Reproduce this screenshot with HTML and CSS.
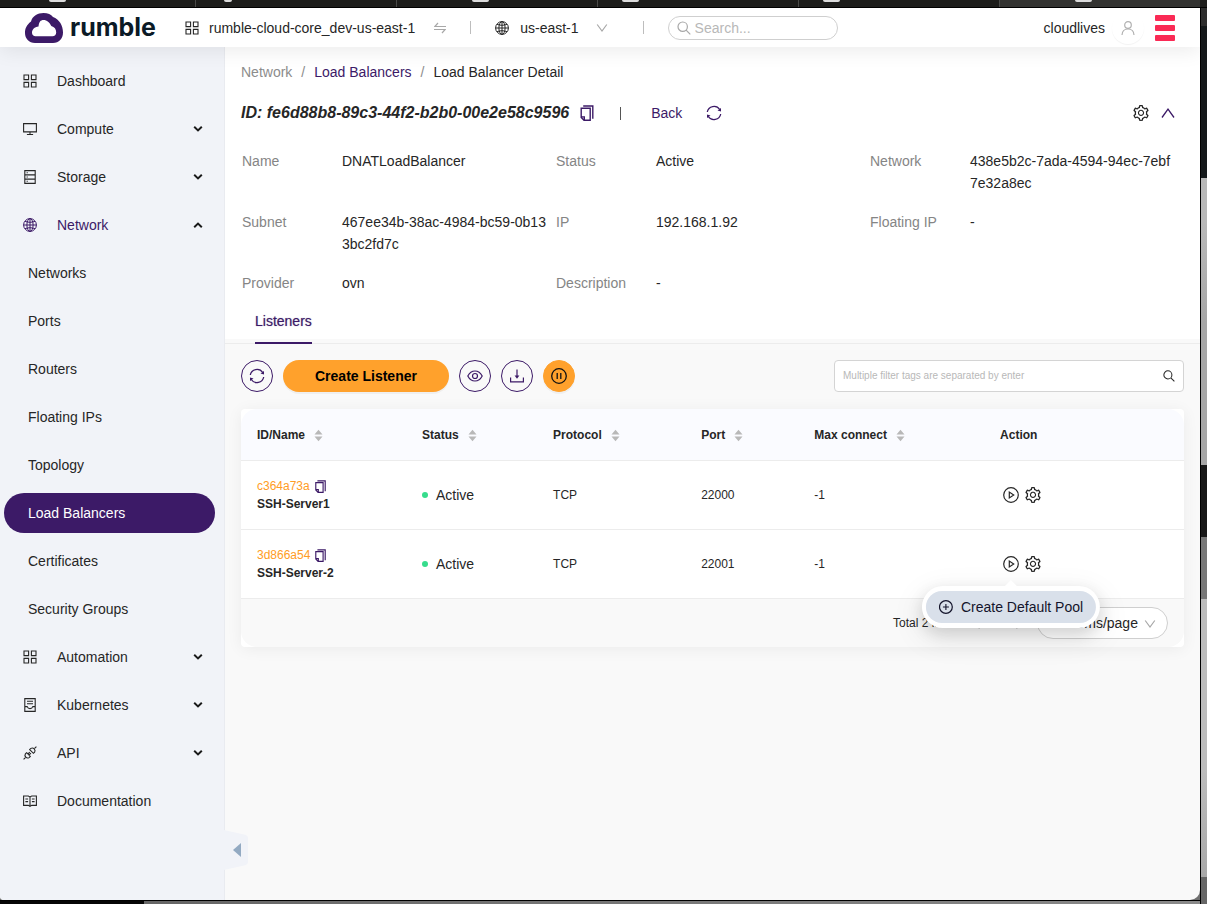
FILE: index.html
```html
<!DOCTYPE html>
<html lang="en">
<head>
<meta charset="utf-8">
<title>Load Balancer Detail - Rumble Cloud</title>
<link rel="stylesheet" href="styles.css">
</head>
<body>
<svg class="sprite" aria-hidden="true">
  <symbol id="grid" viewBox="0 0 14 14"><path d="M1 1h4.6v4.6H1zM8.4 1H13v4.6H8.4zM1 8.4h4.6V13H1zM8.4 8.4H13V13H8.4z" fill="none" stroke="currentColor" stroke-width="1.1"/></symbol>
  <symbol id="monitor" viewBox="0 0 14 14"><path d="M.6 1.6h12.8v8.3H.6zM7 10v2.4M3.9 12.5h6.2" fill="none" stroke="currentColor" stroke-width="1.1"/></symbol>
  <symbol id="storage" viewBox="0 0 14 14"><path d="M1.8.6h10.4v12.8H1.8zM1.8 4.9h10.4M1.8 9.1h10.4" fill="none" stroke="currentColor" stroke-width="1.1"/><path d="M3.6 2.2h1.2v1.1H3.6zM3.6 6.4h1.2v1.1H3.6zM3.6 10.7h1.2v1.1H3.6z" fill="currentColor"/></symbol>
  <symbol id="globe" viewBox="0 0 14 14"><g fill="none" stroke="currentColor" stroke-width="1"><circle cx="7" cy="7" r="6.4"/><ellipse cx="7" cy="7" rx="3.1" ry="6.4"/><path d="M7 .6v12.8M.6 7h12.8M2 3.3c3 1.3 7 1.3 10 0M2 10.7c3-1.3 7-1.3 10 0"/></g></symbol>
  <symbol id="kube" viewBox="0 0 14 14"><path d="M1.8.6h10.4v12.8H1.8zM4 3.3h6M4 5.7h6M1.8 8.6h2.4c.5 1.4 1.5 2 2.8 2s2.3-.6 2.8-2h2.4" fill="none" stroke="currentColor" stroke-width="1.1"/></symbol>
  <symbol id="plug" viewBox="0 0 14 14"><g fill="none" stroke="currentColor" stroke-width="1.1"><path d="M6.7 3.6 10.4 7.3l1.200-1.200a2.700 2.700 0 0 0-3.700-3.700zM3.600 6.700 7.300 10.400 6.100 11.600a2.700 2.700 0 0 1-3.700-3.700zM11.600 2.400 13.400.6M2.400 11.600.6 13.400M4.900 8l1.900-1.900M6 9.100l1.900-1.900"/></g></symbol>
  <symbol id="book" viewBox="0 0 14 14"><path d="M.6 2h4.7L7 2.9 8.7 2h4.7v9.4H8.7L7 12.4l-1.7-1H.6zM7 3v9M2.4 5h2.7M2.4 7.6h2.7M8.9 5h2.7M8.9 7.6h2.7" fill="none" stroke="currentColor" stroke-width="1.1"/></symbol>
  <symbol id="bold-down" viewBox="0 0 10 10"><path d="M1.2 2.800 5 6.400l3.800-3.600" fill="none" stroke="currentColor" stroke-width="2"/></symbol>
  <symbol id="bold-up" viewBox="0 0 10 10"><path d="M1.200 7.200 5 3.600l3.800 3.600" fill="none" stroke="currentColor" stroke-width="2"/></symbol>
  <symbol id="down" viewBox="0 0 12 12"><path d="M1.2 2.500 6 9l4.800-6.500" fill="none" stroke="currentColor" stroke-width="1.200"/></symbol>
  <symbol id="up" viewBox="0 0 14 14"><path d="M1 11.500 7 3.200l6 8.300" fill="none" stroke="currentColor" stroke-width="1.300"/></symbol>
  <symbol id="left" viewBox="0 0 12 12"><path d="M8.500 1 3 6l5.500 5" fill="none" stroke="currentColor" stroke-width="1.200"/></symbol>
  <symbol id="right" viewBox="0 0 12 12"><path d="M3.500 1 9 6l-5.500 5" fill="none" stroke="currentColor" stroke-width="1.200"/></symbol>
  <symbol id="swap" viewBox="0 0 12 12"><path d="M12 4.500H.8L4 1M0 7.500h11.200L8 11" fill="none" stroke="currentColor" stroke-width="1.200"/></symbol>
  <symbol id="search" viewBox="0 0 14 14"><g fill="none" stroke="currentColor" stroke-width="1.200"><circle cx="5.700" cy="5.700" r="4.700"/><path d="m9.100 9.100 4.200 4.200"/></g></symbol>
  <symbol id="user" viewBox="0 0 14 14"><g fill="none" stroke="currentColor" stroke-width="1.200"><circle cx="7" cy="4" r="3.300"/><path d="M1 14c.2-3.700 2.600-6 6-6s5.800 2.300 6 6"/></g></symbol>
  <symbol id="copy" viewBox="0 0 16 16"><path d="M4.200 1h9.600v12.700M2.200 3.200h9v12H5l-2.800-2.800zM5.300 14.800v-2.900H2.500" fill="none" stroke="currentColor" stroke-width="1.400"/></symbol>
  <symbol id="reload" viewBox="0 0 16 16"><path d="M1.300 7A6.800 6.800 0 0 1 13.700 4.500M14.700 9A6.800 6.800 0 0 1 2.300 11.500" fill="none" stroke="currentColor" stroke-width="1.300"/><path d="M15 3v3.500l-3.500-.9zM1 13V9.500l3.500.9z" fill="currentColor"/></symbol>
  <symbol id="eye" viewBox="0 0 16 16"><g fill="none" stroke="currentColor" stroke-width="1.200"><path d="M.8 8C2.500 4.700 5 3 8 3s5.500 1.700 7.200 5C13.500 11.300 11 13 8 13S2.500 11.300.8 8z"/><circle cx="8" cy="8" r="2.500"/></g></symbol>
  <symbol id="download" viewBox="0 0 16 16"><path d="M8 1.500V9M1.600 9.600v4.200h12.800V9.600" fill="none" stroke="currentColor" stroke-width="1.200"/><path d="M5.600 7.600h4.800L8 10.800z" fill="currentColor"/></symbol>
  <symbol id="pause" viewBox="0 0 16 16"><circle cx="8" cy="8" r="7.300" fill="none" stroke="currentColor" stroke-width="1.300"/><path d="M6.200 5v6M9.800 5v6" stroke="currentColor" stroke-width="1.300"/></symbol>
  <symbol id="play" viewBox="0 0 16 16"><circle cx="8" cy="8" r="7.300" fill="none" stroke="currentColor" stroke-width="1.200"/><path d="M6.300 5.100v5.800L10.700 8z" fill="none" stroke="currentColor" stroke-width="1.200"/></symbol>
  <symbol id="plus" viewBox="0 0 14 14"><circle cx="7" cy="7" r="6.400" fill="none" stroke="currentColor" stroke-width="1.200"/><path d="M7 4v6M4 7h6" stroke="currentColor" stroke-width="1.100"/></symbol>
  <symbol id="sort" viewBox="0 0 9 13"><path d="M4.500.8 8.500 5.500H.5zM4.500 12.200.5 7.500h8z" fill="currentColor"/></symbol>
  <symbol id="gear" viewBox="64 64 896 896"><path fill="currentColor" d="M924.8 625.7l-65.5-56c3.1-19 4.7-38.4 4.7-57.8s-1.6-38.800-4.700-57.800l65.500-56a32.030 32.030 0 009.300-35.200l-.9-2.600a443.740 443.740 0 00-79.700-137.900l-1.800-2.100a32.120 32.120 0 00-35.100-9.500l-81.300 28.900c-30-24.600-63.500-44-99.700-57.600l-15.700-85a32.050 32.050 0 00-25.800-25.700l-2.700-.5c-52.100-9.400-106.900-9.400-159 0l-2.700.5a32.050 32.050 0 00-25.800 25.700l-15.800 85.400a351.860 351.860 0 00-99 57.400l-81.900-29.100a32 32 0 00-35.100 9.500l-1.800 2.100a446.020 446.020 0 00-79.700 137.900l-.9 2.600c-4.500 12.500-.8 26.500 9.300 35.200l66.300 56.600c-3.100 18.800-4.600 38-4.600 57.100 0 19.200 1.500 38.400 4.600 57.100L99 625.500a32.030 32.030 0 00-9.300 35.200l.9 2.600c18.100 50.400 44.900 96.900 79.700 137.900l1.800 2.100a32.120 32.120 0 0035.100 9.500l81.900-29.100c29.800 24.500 63.100 43.900 99 57.400l15.800 85.400a32.050 32.050 0 0025.800 25.700l2.700.5a449.400 449.400 0 00159 0l2.700-.5a32.050 32.050 0 0025.800-25.700l15.700-85a350 350 0 0099.700-57.600l81.300 28.900a32 32 0 0035.100-9.500l1.800-2.100c34.800-41.100 61.600-87.500 79.700-137.900l.9-2.600c4.500-12.300.8-26.300-9.300-35zM788.300 465.900c2.500 15.100 3.800 30.600 3.800 46.100s-1.300 31-3.800 46.100l-6.600 40.100 74.700 63.900a370.030 370.030 0 01-42.600 73.600L721 702.800l-31.400 25.800c-23.900 19.600-50.500 35-79.300 45.800l-38.100 14.300-17.900 97a377.500 377.500 0 01-85 0l-17.900-97.200-37.800-14.500c-28.500-10.800-55-26.200-78.700-45.700l-31.400-25.900-93.400 33.200c-17-22.900-31.200-47.600-42.600-73.600l75.500-64.500-6.500-40c-2.400-14.900-3.700-30.300-3.700-45.500 0-15.300 1.200-30.600 3.700-45.500l6.500-40-75.500-64.500c11.300-26.100 25.600-50.700 42.600-73.600l93.400 33.200 31.400-25.900c23.700-19.500 50.200-34.900 78.700-45.700l37.900-14.300 17.900-97.200c28.100-3.200 56.800-3.200 85 0l17.900 97 38.100 14.300c28.700 10.800 55.400 26.200 79.300 45.800l31.400 25.800 92.800-32.900c17 22.900 31.200 47.600 42.600 73.600L781.800 426l6.500 39.900zM512 326c-97.200 0-176 78.800-176 176s78.800 176 176 176 176-78.800 176-176-78.800-176-176-176zm79.200 255.200A111.600 111.600 0 01512 614c-29.900 0-58-11.700-79.200-32.800A111.600 111.600 0 01400 502c0-29.900 11.700-58 32.800-79.200C454 401.600 482.100 390 512 390c29.900 0 58 11.600 79.200 32.800A111.600 111.600 0 01624 502c0 29.900-11.700 58-32.800 79.200z"/></symbol>
</svg>

<div class="tabstrip">
  <div class="tab tab-first"><i class="fav"></i></div>
  <div class="tab tab-near"><i class="fav fav-round"></i></div>
  <div class="tab tab-far"><i class="fav"></i></div>
  <div class="tab tab-near"><i class="fav"></i></div>
  <div class="tab tab-near"><i class="fav"></i></div>
  <div class="tab tab-far tab-active"><i class="fav"></i></div>
</div>

<div class="window">
  <header class="topbar">
    <a class="logo" href="#">
      <svg class="cloud" viewBox="0 0 38 30"><path fill="#3c1a67" fill-rule="evenodd" d="M10 30C4 30 0 25.500 0 20c0-4.500 1.500-8 6-11.500C7.500 3 12.500 0 18.500 0c4.500 0 7.500 1.600 9.500 4C34.500 6.500 38 12.500 38 19.500 38 25.800 34 30 28 30zM10.500 23.200h17c2.200 0 3.700-1.500 3.700-3.700 0-3.500-1.700-5.500-4.900-6.500C24.500 9.500 22 7 18.500 7c-3 0-4.500 2-5 6.500C9.500 13.800 7 16.500 7 19.700c0 2.200 1.500 3.500 3.500 3.500z"/></svg>
      <span>rumble</span>
    </a>
    <button class="project" type="button"><svg class="i14"><use href="#grid"/></svg><span>rumble-cloud-core_dev-us-east-1</span><svg class="i12 pale"><use href="#swap"/></svg></button>
    <i class="bar"></i>
    <button class="region" type="button"><svg class="i14"><use href="#globe"/></svg><span>us-east-1</span><svg class="i12 pale"><use href="#down"/></svg></button>
    <i class="bar"></i>
    <label class="search"><svg class="i14 pale"><use href="#search"/></svg><input type="text" placeholder="Search..." aria-label="Search"></label>
    <div class="account">
      <span>cloudlives</span>
      <button class="avatar" type="button" aria-label="Account"><svg class="i14"><use href="#user"/></svg></button>
      <button class="burger" type="button" aria-label="Menu"><i></i><i></i><i></i></button>
    </div>
  </header>

  <div class="body">
    <aside class="sidebar">
      <nav class="menu">
        <a class="item" href="#"><svg class="i14"><use href="#grid"/></svg><span>Dashboard</span></a>
        <a class="item" href="#"><svg class="i14"><use href="#monitor"/></svg><span>Compute</span><svg class="caret"><use href="#bold-down"/></svg></a>
        <a class="item" href="#"><svg class="i14"><use href="#storage"/></svg><span>Storage</span><svg class="caret"><use href="#bold-down"/></svg></a>
        <a class="item open" href="#"><svg class="i14"><use href="#globe"/></svg><span>Network</span><svg class="caret"><use href="#bold-up"/></svg></a>
        <a class="item sub" href="#">Networks</a>
        <a class="item sub" href="#">Ports</a>
        <a class="item sub" href="#">Routers</a>
        <a class="item sub" href="#">Floating IPs</a>
        <a class="item sub" href="#">Topology</a>
        <a class="item sub current" href="#">Load Balancers</a>
        <a class="item sub" href="#">Certificates</a>
        <a class="item sub" href="#">Security Groups</a>
        <a class="item" href="#"><svg class="i14"><use href="#grid"/></svg><span>Automation</span><svg class="caret"><use href="#bold-down"/></svg></a>
        <a class="item" href="#"><svg class="i14"><use href="#kube"/></svg><span>Kubernetes</span><svg class="caret"><use href="#bold-down"/></svg></a>
        <a class="item" href="#"><svg class="i14"><use href="#plug"/></svg><span>API</span><svg class="caret"><use href="#bold-down"/></svg></a>
        <a class="item" href="#"><svg class="i14"><use href="#book"/></svg><span>Documentation</span></a>
      </nav>
      <button class="collapse" type="button" aria-label="Collapse menu"><svg viewBox="0 0 24 40"><path d="M0 0 22 5q2 1 2 3v24q0 2-2 3L0 40z" fill="#f1f3f8"/><path d="M17 13v14L9 20z" fill="#93aac2"/></svg></button>
    </aside>

    <main class="main">
      <section class="detail">
        <nav class="crumbs"><a href="#">Network</a><i>/</i><a class="link" href="#">Load Balancers</a><i>/</i><span>Load Balancer Detail</span></nav>
        <div class="title">
          <h1>ID: fe6d88b8-89c3-44f2-b2b0-00e2e58c9596</h1>
          <button class="plain violet" type="button" aria-label="Copy ID"><svg class="i16"><use href="#copy"/></svg></button>
          <i class="rule"></i>
          <a class="back" href="#">Back</a>
          <button class="plain violet" type="button" aria-label="Refresh"><svg class="i16"><use href="#reload"/></svg></button>
          <button class="plain push" type="button" aria-label="Settings"><svg class="i16"><use href="#gear"/></svg></button>
          <button class="plain violet" type="button" aria-label="Fold"><svg class="i14"><use href="#up"/></svg></button>
        </div>
        <dl class="facts">
          <div><dt>Name</dt><dd>DNATLoadBalancer</dd></div>
          <div><dt>Status</dt><dd>Active</dd></div>
          <div><dt>Network</dt><dd>438e5b2c-7ada-4594-94ec-7ebf7e32a8ec</dd></div>
          <div><dt>Subnet</dt><dd>467ee34b-38ac-4984-bc59-0b133bc2fd7c</dd></div>
          <div><dt>IP</dt><dd>192.168.1.92</dd></div>
          <div><dt>Floating IP</dt><dd>-</dd></div>
          <div><dt>Provider</dt><dd>ovn</dd></div>
          <div><dt>Description</dt><dd>-</dd></div>
        </dl>
        <div class="tabs" role="tablist"><button class="tabbtn" type="button" role="tab" aria-selected="true">Listeners</button></div>
      </section>

      <section class="content">
        <div class="toolbar">
          <button class="round" type="button" aria-label="Refresh list"><svg class="i16"><use href="#reload"/></svg></button>
          <button class="create" type="button">Create Listener</button>
          <button class="round" type="button" aria-label="Columns"><svg class="i16"><use href="#eye"/></svg></button>
          <button class="round" type="button" aria-label="Download"><svg class="i16"><use href="#download"/></svg></button>
          <button class="round filled" type="button" aria-label="Pause"><svg class="i16"><use href="#pause"/></svg></button>
          <label class="filter"><input type="text" placeholder="Multiple filter tags are separated by enter" aria-label="Filter"><svg class="i12"><use href="#search"/></svg></label>
        </div>

        <div class="card">
          <table class="table">
            <thead>
              <tr>
                <th class="c-id">ID/Name<svg class="sort"><use href="#sort"/></svg></th>
                <th class="c-status">Status<svg class="sort"><use href="#sort"/></svg></th>
                <th class="c-protocol">Protocol<svg class="sort"><use href="#sort"/></svg></th>
                <th class="c-port">Port<svg class="sort"><use href="#sort"/></svg></th>
                <th class="c-max">Max connect<svg class="sort"><use href="#sort"/></svg></th>
                <th>Action</th>
              </tr>
            </thead>
            <tbody>
              <tr>
                <td><div class="idline"><a href="#">c364a73a</a><button class="plain violet" type="button" aria-label="Copy"><svg class="i12"><use href="#copy"/></svg></button></div><b>SSH-Server1</b></td>
                <td><span class="state">Active</span></td>
                <td>TCP</td><td>22000</td><td>-1</td>
                <td><div class="actions"><button class="plain" type="button" aria-label="Actions"><svg class="i16"><use href="#play"/></svg></button><button class="plain" type="button" aria-label="Settings"><svg class="i16"><use href="#gear"/></svg></button></div></td>
              </tr>
              <tr>
                <td><div class="idline"><a href="#">3d866a54</a><button class="plain violet" type="button" aria-label="Copy"><svg class="i12"><use href="#copy"/></svg></button></div><b>SSH-Server-2</b></td>
                <td><span class="state">Active</span></td>
                <td>TCP</td><td>22001</td><td>-1</td>
                <td><div class="actions">
                  <div class="anchor">
                    <button class="plain" type="button" aria-label="Actions"><svg class="i16"><use href="#play"/></svg></button>
                    <div class="popover"><button type="button"><svg class="i14"><use href="#plus"/></svg>Create Default Pool</button></div>
                  </div>
                  <button class="plain" type="button" aria-label="Settings"><svg class="i16"><use href="#gear"/></svg></button></div></td>
              </tr>
            </tbody>
          </table>
          <footer class="pager">
            <span>Total 2 items</span>
            <button class="plain" type="button" aria-label="Previous page"><svg class="i12"><use href="#left"/></svg></button>
            <span>1</span>
            <button class="plain" type="button" aria-label="Next page"><svg class="i12"><use href="#right"/></svg></button>
            <div class="size"><select aria-label="Page size"><option>10 items/page</option></select><svg class="i12 pale"><use href="#down"/></svg></div>
          </footer>
        </div>
      </section>
    </main>
  </div>
</div>
<div class="desk-side"></div>
<div class="desk-foot"></div>
</body>
</html>
```
FILE: styles.css
```css
* { box-sizing: border-box; }

body {
  margin: 0;
  min-height: 100vh;
  display: grid;
  grid-template-columns: minmax(0, 1fr) 7px;
  grid-template-rows: 8px minmax(0, 1fr) 4px;
  background: #707070;
  color: #262626;
  font: 14px/22px "Liberation Sans", Arial, sans-serif;
}

button, input, select { font: inherit; color: inherit; }
button { padding: 0; border: 0; background: none; cursor: pointer; }
a { color: inherit; text-decoration: none; }
svg { display: block; flex: none; }

.sprite { position: absolute; width: 0; height: 0; }
.i12 { width: 12px; height: 12px; }
.i14 { width: 14px; height: 14px; }
.i16 { width: 16px; height: 16px; }
.pale { color: #a8a8a8; }
.plain { display: flex; }
.violet { color: #3c1a67; }

/* Browser tabs above the page */
.tabstrip {
  grid-column: 1 / 3;
  display: grid;
  grid-template-columns: 195fr repeat(5, 201fr);
  padding-right: 7px;
  background: #1d1d1b;
  border-bottom: 1px solid #000;
}
.tab { min-width: 0; border-left: 1px solid #4a4a48; }
.tab-first { border-left: 0; padding-left: 49px; }
.tab-near { padding-left: 24px; }
.tab-far { padding-left: 75px; }
.tab-active { background: #333331; }
.fav { display: block; width: 17px; height: 2px; border-radius: 0 0 4px 4px; background: #dcdcdc; }
.fav-round { width: 8px; margin-left: 4px; }

/* Desktop showing around the window */
.desk-side {
  grid-column: 2;
  grid-row: 2 / 4;
  border-left: 1px solid #000;
  background: linear-gradient(#2d2d2d 2%, #14181a 2% 19%, #b8b8b8 19% 24%, #a6a6a6 35% 51%, #171717 51% 59%, #777 59% 66%, #bcbcbc 66% 85%, #a8a8a8 97%, #666 97%);
}
.desk-foot {
  grid-column: 1;
  grid-row: 3;
  border-top: 1px solid #000;
  background: linear-gradient(90deg, #050505 12%, #666 12%, #8a8a8a);
}
.window {
  grid-column: 1;
  grid-row: 2;
  display: flex;
  flex-direction: column;
  overflow: hidden;
  background: #f9f9f9;
  border-radius: 0 0 10px 4px;
}

/* Top bar */
.topbar {
  position: relative;
  z-index: 2;
  display: flex;
  align-items: center;
  height: 39px;
  padding: 0 25px;
  background: #fff;
  box-shadow: 0 4px 20px rgba(0, 0, 0, 0.08);
}
.logo { display: flex; align-items: center; gap: 7px; width: 160px; color: #0b1a26; font: 700 25px/30px Inter, sans-serif; }
.cloud { width: 38px; height: 30px; }
.logo span { padding-bottom: 2px; }
.project, .region { display: flex; align-items: center; }
.project { gap: 10px; padding-right: 4px; }
.project span { padding-right: 9px; }
.region { gap: 11px; }
.region span { padding-right: 6px; }
.bar { width: 1px; height: 13px; margin: 0 24px 0 20px; background: #bdbdbd; }
.region + .bar { margin: 0 24px 0 35px; }
.search { display: flex; align-items: center; gap: 4px; width: 170px; height: 24px; padding: 0 8px; border: 1px solid #cfcfcf; border-radius: 12px; }
.search input { width: 100%; min-width: 0; padding: 0; border: 0; outline: 0; background: none; }
input::placeholder { color: #b8b8b8; opacity: 1; }
.account { display: flex; align-items: center; margin-left: auto; gap: 7px; }
.avatar { display: grid; place-items: center; width: 32px; height: 32px; border-radius: 50%; color: #b0b0b0; box-shadow: 0 1px 1px rgba(0, 0, 0, 0.05); }
.burger { display: grid; gap: 4px; width: 20px; margin-left: 4px; }
.burger i { height: 6px; border-radius: 1px; background: #fa2a55; }

/* Sidebar */
.body { flex: 1; display: flex; }
.sidebar { position: relative; flex: none; width: 225px; padding: 14px 9px 14px 4px; background: #f1f3f8; border-right: 1px solid #e9ebf0; }
.menu { display: grid; gap: 8px; }
.item { display: flex; align-items: center; gap: 20px; height: 40px; padding: 0 12px 0 19px; border-radius: 20px; }
.open { color: #3c1a67; }
.sub { padding-left: 24px; }
.current { background: #3c1a67; color: #fff; }
.caret { width: 10px; height: 10px; margin-left: auto; color: #1a1a1a; }
.collapse { position: absolute; left: 100%; bottom: 30px; width: 24px; height: 40px; }

/* Detail header */
.main { flex: 1; min-width: 0; }
.detail { background: linear-gradient(#fff calc(100% - 4px), #f9f9f9 0); border-bottom: 1px solid #ececec; padding: 14px 16px 0; }
.crumbs { display: flex; gap: 9px; }
.crumbs > :first-child, .crumbs i { color: #8c8c8c; font-style: normal; }
.crumbs .link, .back { color: #3c1a67; }
.title { display: flex; align-items: center; height: 22px; margin-top: 19px; }
h1 { margin: 0 10px 0 0; font: italic 700 16px/22px "Liberation Sans", Arial, sans-serif; }
.rule { width: 1px; height: 13px; margin: 0 30px 0 25px; background: #555; }
.back { margin-right: 24px; }
.push { margin-left: auto; margin-right: 12px; }
.title > :last-child { margin-right: 9px; }
.facts { display: grid; grid-template-columns: repeat(3, minmax(0, 1fr)); gap: 17px 0; margin: 26px 0 0; padding-left: 1px; }
.facts div { display: grid; grid-template-columns: 100px minmax(0, 1fr); }
dt { color: #858585; }
dd { margin: 0; padding-right: 8px; word-break: break-all; }
.tabs { display: flex; padding: 16px 14px 0; }
.tabbtn { height: 34px; padding-bottom: 10px; border-bottom: 2px solid #3c1a67; color: #3c1a67; text-shadow: 0 0 1px rgba(60, 26, 103, 0.5); margin-bottom: -1px; }

/* Toolbar */
.content { padding: 16px; }
.toolbar { display: flex; gap: 10px; }
.round { display: grid; place-items: center; width: 32px; height: 32px; border: 1px solid #3c1a67; border-radius: 50%; color: #3c1a67; }
.filled { border-color: #ffa12c; background: #ffa12c; color: #111; box-shadow: 0 2px 0 rgba(0, 0, 0, 0.04); }
.create { height: 32px; padding: 0 32px; border-radius: 16px; background: #ffa12c; color: #000; font-weight: 700; box-shadow: 0 2px 0 rgba(0, 0, 0, 0.04); }
.filter { display: flex; align-items: center; width: 350px; height: 32px; margin-left: auto; padding: 0 8px; border: 1px solid #d4d4d4; border-radius: 4px; background: #fff; }
.filter input { flex: 1; min-width: 0; padding: 0; border: 0; outline: 0; font-size: 10px; }

/* Listener table */
.card { margin-top: 17px; border-radius: 4px; background: #fff; box-shadow: 0 2px 16px rgba(0, 0, 0, 0.06); }
.table { width: 100%; table-layout: fixed; border-collapse: separate; border-spacing: 0; font-size: 12px; line-height: 18px; }
th, td { padding: 0 16px; border-bottom: 1px solid #ececec; text-align: left; }
th { height: 52px; background: #fafbff; font-weight: 700; }
th:first-child { border-top-left-radius: 16px; }
th:last-child { border-top-right-radius: 16px; }
td { height: 69px; }
.c-id { width: 17.5%; }
.c-status { width: 13.9%; }
.c-protocol { width: 15.7%; }
.c-port { width: 12%; }
.c-max { width: 19.7%; }
.sort { display: inline-block; width: 9px; height: 13px; margin-left: 9px; vertical-align: -3px; color: #b8b8b8; }
.idline { display: flex; align-items: center; gap: 4px; color: #ff9c24; }
.idline svg { width: 13px; height: 13px; }
.state { display: flex; align-items: center; gap: 8px; font-size: 14px; }
.state::before { content: ""; width: 6px; height: 6px; border-radius: 50%; background: #36dc8c; }
.actions { display: flex; gap: 6px; padding-left: 3px; }
.anchor { position: relative; }
.popover { position: absolute; z-index: 1; top: 30px; left: 50%; transform: translateX(-50%); padding: 5px 4px; border-radius: 21px; background: #fff; box-shadow: 0 6px 16px rgba(0, 0, 0, 0.14), 0 9px 28px 8px rgba(0, 0, 0, 0.05); }
.popover::before { content: ""; position: absolute; top: -6px; left: calc(50% - 6px); border: 6px solid transparent; border-top: 0; border-bottom-color: #fff; }
.popover button { display: flex; align-items: center; gap: 8px; height: 32px; padding: 0 13px; border-radius: 16px; background: #d9e0ea; color: #14142b; white-space: nowrap; font-size: 14px; }
.pager { display: flex; align-items: center; justify-content: flex-end; padding: 8px 16px; border-radius: 0 0 16px 16px; background: #f9f9f9; font-size: 12px; }
.pager > span { margin-right: 11px; }
.pager .plain { margin-right: 12px; }
.size { position: relative; }
.size select { width: 131px; height: 32px; padding: 0 12px; border: 1px solid #cfcfcf; border-radius: 16px; background: #fff; appearance: none; font-size: 14px; }
.size svg { position: absolute; right: 12px; top: 11px; pointer-events: none; }
```
